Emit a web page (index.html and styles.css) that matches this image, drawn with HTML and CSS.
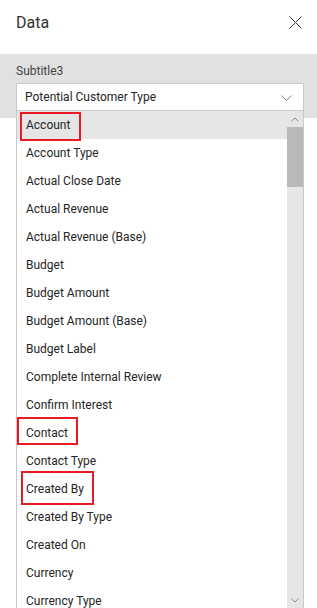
FILE: index.html
```html
<!DOCTYPE html>
<html lang="en">
<head>
    <meta charset="UTF-8">
    <meta name="viewport" content="width=device-width, initial-scale=1.0">
    <title>Data</title>
    <link rel="stylesheet" href="styles.css">
</head>
<body>
    <header class="panel-header">
        <h1 class="panel-title">Data</h1>
        <button class="close-btn" aria-label="Close">
            <svg width="13" height="13" viewBox="0 0 13 13">
                <path d="M0.5 0.5 L12.5 12.5 M12.5 0.5 L0.5 12.5" stroke="#333" stroke-width="1" fill="none"/>
            </svg>
        </button>
    </header>

    <section class="field-area">
        <div class="field-label">Subtitle3</div>
        <div class="combo">
            <div class="combo-box">
                <span>Potential Customer Type</span>
                <svg class="chevron" width="11" height="6" viewBox="0 0 11 6">
                    <path d="M0.5 0.5 L5.5 5.5 L10.5 0.5" stroke="#8a8a8a" stroke-width="1" fill="none"/>
                </svg>
            </div>

            <!-- open dropdown -->
            <div class="dropdown">
                <ul class="options">
                    <li class="option selected">Account<span class="mark mark-account"></span></li>
                    <li class="option">Account Type</li>
                    <li class="option">Actual Close Date</li>
                    <li class="option">Actual Revenue</li>
                    <li class="option">Actual Revenue (Base)</li>
                    <li class="option">Budget</li>
                    <li class="option">Budget Amount</li>
                    <li class="option">Budget Amount (Base)</li>
                    <li class="option">Budget Label</li>
                    <li class="option">Complete Internal Review</li>
                    <li class="option">Confirm Interest</li>
                    <li class="option">Contact<span class="mark mark-contact"></span></li>
                    <li class="option">Contact Type</li>
                    <li class="option">Created By<span class="mark mark-created"></span></li>
                    <li class="option">Created By Type</li>
                    <li class="option">Created On</li>
                    <li class="option">Currency</li>
                    <li class="option">Currency Type</li>
                </ul>
                <div class="scrollbar">
                    <span class="scroll-arrow">
                        <svg width="8" height="5" viewBox="0 0 8 5">
                            <path d="M0.5 4.5 L4 1 L7.5 4.5" stroke="#8a8a8a" stroke-width="1" fill="none"/>
                        </svg>
                    </span>
                    <span class="scroll-thumb"></span>
                    <span class="scroll-space"></span>
                    <span class="scroll-arrow">
                        <svg width="8" height="5" viewBox="0 0 8 5">
                            <path d="M0.5 0.5 L4 4 L7.5 0.5" stroke="#8a8a8a" stroke-width="1" fill="none"/>
                        </svg>
                    </span>
                </div>
            </div>
        </div>
    </section>
</body>
</html>
```

FILE: styles.css
```css
/* General Styles */
body {
    margin: 0;
    padding: 0;
    width: 317px;
    height: 608px;
    overflow: hidden;
    background: #fff;
    color: #252525;
    font-family: Roboto, 'Liberation Sans', sans-serif;
    font-size: 12px;
}

/* Header */
.panel-header {
    display: flex;
    justify-content: space-between;
    align-items: flex-start;
    height: 54px;
    padding: 13px 15px 0 16px;
    box-sizing: border-box;
}

.panel-title {
    margin: 0;
    font-size: 16px;
    font-weight: 400;
    line-height: 20px;
    color: #333;
}

.close-btn {
    border: none;
    background: none;
    padding: 0;
    margin-top: 3px;
    width: 13px;
    height: 13px;
    cursor: pointer;
}

.close-btn svg {
    display: block;
}

/* Field */
.field-area {
    background: #e1e1e1;
    padding: 9px 13px 7px 16px;
}

.field-label {
    line-height: 16px;
    color: #444;
    margin-bottom: 4px;
}

.combo {
    position: relative;
}

.combo-box {
    display: flex;
    justify-content: space-between;
    align-items: center;
    height: 28px;
    padding: 0 11px 0 8px;
    background: #fff;
    border: 1px solid #c8c8c8;
    box-sizing: border-box;
}

.chevron {
    display: block;
    margin-top: 1px;
}

/* Dropdown */
.dropdown {
    position: absolute;
    top: 100%;
    left: 0;
    right: 0;
    height: 497px;
    display: flex;
    background: #fff;
    border-left: 1px solid #c8c8c8;
    border-right: 1px solid #c8c8c8;
    z-index: 10;
}

.options {
    flex: 1;
    list-style: none;
    margin: 0;
    padding: 0;
}

.option {
    position: relative;
    height: 28px;
    line-height: 27px;
    padding: 1px 0 0 9px;
    box-sizing: border-box;
    white-space: nowrap;
}

.option.selected {
    background: #e6e6e6;
}

.mark {
    position: absolute;
    border: 2px solid #e81b23;
    box-sizing: border-box;
}

.mark-account {
    left: 3px;
    top: 1px;
    width: 61px;
    height: 29px;
}

.mark-contact {
    left: 0;
    top: -2px;
    width: 61px;
    height: 28px;
}

.mark-created {
    left: 4px;
    top: -4px;
    width: 73px;
    height: 34px;
}

/* Scrollbar */
.scrollbar {
    width: 16px;
    display: flex;
    flex-direction: column;
    background: #e6e6e6;
}

.scroll-arrow {
    display: flex;
    justify-content: center;
    align-items: center;
    height: 16px;
}

.scroll-arrow svg {
    display: block;
}

.scroll-thumb {
    height: 60px;
    background: #b9b9b9;
}

.scroll-space {
    flex: 1;
}
```
